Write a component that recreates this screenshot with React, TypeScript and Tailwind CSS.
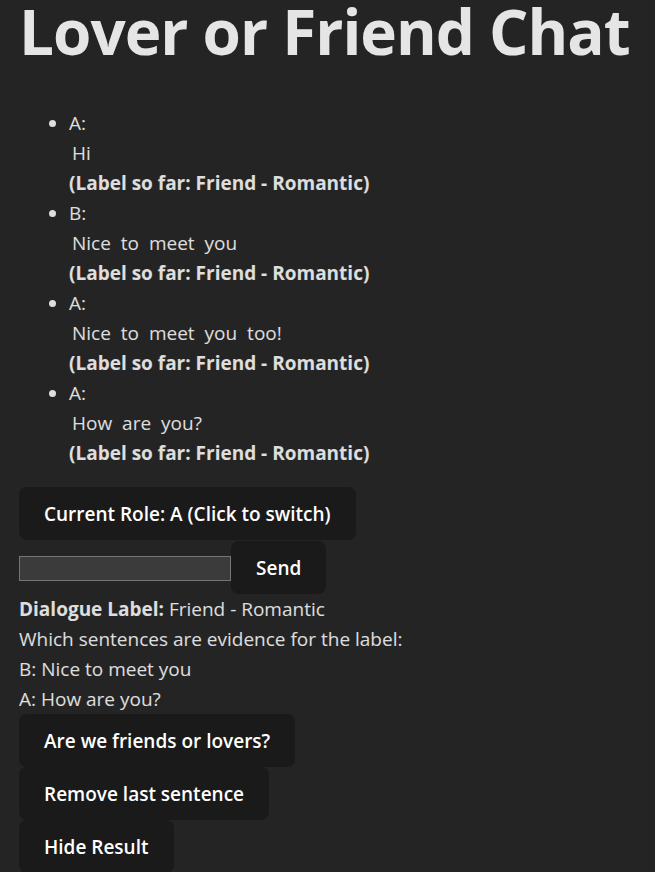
const messages = [
  { role: "A", text: "Hi" },
  { role: "B", text: "Nice to meet you" },
  { role: "A", text: "Nice to meet you too!" },
  { role: "A", text: "How are you?" },
];

const btn =
  "h-[53px] rounded-lg bg-[#1a1a1a] px-[25px] text-white font-semibold leading-[30px] text-left whitespace-nowrap";

export default function App() {
  return (
    <div
      className="min-h-[872px] bg-[#242424] text-[19px] leading-[30px] text-white/85 overflow-hidden"
      style={{ fontFamily: '"Open Sans", "Noto Sans", sans-serif' }}
    >
      <div className="px-[19px]">
        <h1 className="mt-[1px] h-[60px] text-[62px] leading-[60px] font-bold tracking-[-1px] whitespace-nowrap text-[#e5e5e5]">
          Lover or Friend Chat
        </h1>

        <ul className="mt-[47px] mb-[19px] list-disc pl-[50px]">
          {messages.map((m, i) => (
            <li key={i}>
              <div>{m.role}:</div>
              <div className="pl-[3px] [word-spacing:5px]">{m.text}</div>
              <div className="font-bold">(Label so far: Friend - Romantic)</div>
            </li>
          ))}
        </ul>

        <div className="flex flex-col items-start">
          <button className={btn + " h-[52px]"}>Current Role: A (Click to switch)</button>
          <div className="flex items-center">
            <input
              type="text"
              className="mt-[2px] h-[25px] w-[212px] border border-[#767676] bg-[#3b3b3b] outline-none"
            />
            <button className={btn + " mt-[1px]"}>Send</button>
          </div>
          <div>
            <span className="font-bold">Dialogue Label:</span> Friend - Romantic
          </div>
          <div>Which sentences are evidence for the label:</div>
          <div>B: Nice to meet you</div>
          <div>A: How are you?</div>
          <button className={btn}>Are we friends or lovers?</button>
          <button className={btn}>Remove last sentence</button>
          <button className={btn}>Hide Result</button>
        </div>
      </div>
    </div>
  );
}
